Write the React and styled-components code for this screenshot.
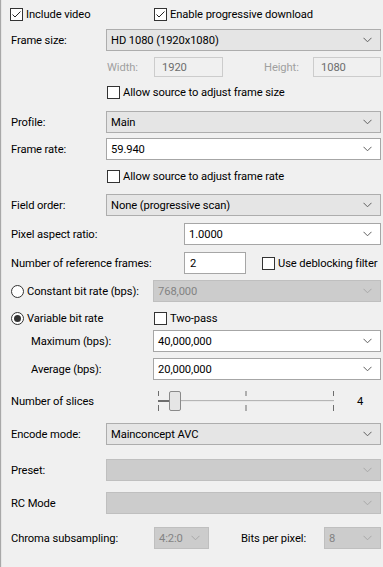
import styled, { createGlobalStyle } from 'styled-components';

const GlobalStyle = createGlobalStyle`
  html, body {
    margin: 0;
    padding: 0;
    background: #f0f0f0;
  }
  * {
    box-sizing: border-box;
  }
`;

const Panel = styled.div`
  width: 383px;
  height: 567px;
  overflow: hidden;
  background: #f0f0f0;
  border-left: 1px solid #a8a8a8;
  box-shadow: inset 1px 0 0 #e6e6e6;
  padding: 4px 2px 0 9px;
  font-family: Roboto, "Liberation Sans", sans-serif;
  font-size: 11.2px;
  letter-spacing: -0.1px;
  color: #000;
  display: flex;
  flex-direction: column;
`;

const Row = styled.div`
  display: flex;
  align-items: center;
  height: ${({ h }) => h || 22}px;
  margin-top: ${({ mt }) => mt || 0}px;
  padding-left: ${({ indent }) => indent || 0}px;
`;

const Label = styled.span`
  flex: none;
  width: ${({ w }) => (w ? `${w}px` : 'auto')};
  padding-left: ${({ pl }) => pl || 0}px;
  color: ${({ disabled }) => (disabled ? '#a0a0a0' : '#000')};
  white-space: nowrap;
`;

const Spacer = styled.div`
  flex: none;
  width: ${({ w }) => w}px;
`;

const Combo = styled.div`
  flex: ${({ w }) => (w ? 'none' : '1')};
  width: ${({ w }) => (w ? `${w}px` : 'auto')};
  height: 22px;
  display: flex;
  align-items: center;
  padding: 0 8px 0 4px;
  white-space: nowrap;
  background: ${({ kind }) =>
    kind === 'edit' ? '#ffffff' : kind === 'off' ? '#cccccc' : '#e5e5e5'};
  border: 1px solid
    ${({ kind }) =>
      kind === 'edit' ? '#a6a6a6' : kind === 'off' ? '#bfbfbf' : '#adadad'};
  color: ${({ kind }) => (kind === 'off' ? '#838383' : '#000')};

  span {
    flex: 1;
  }
`;

const Field = styled.div`
  flex: ${({ w }) => (w ? 'none' : '1')};
  width: ${({ w }) => (w ? `${w}px` : 'auto')};
  height: ${({ h }) => h || 22}px;
  display: flex;
  align-items: center;
  padding-left: ${({ disabled }) => (disabled ? 7 : 5)}px;
  background: ${({ disabled }) => (disabled ? '#f0f0f0' : '#ffffff')};
  border: 1px solid ${({ disabled }) => (disabled ? '#cccccc' : '#a6a6a6')};
  color: ${({ disabled }) => (disabled ? '#6d6d6d' : '#000')};
`;

const Check = styled.label`
  display: flex;
  align-items: center;
  gap: 3px;
  white-space: nowrap;
`;

const Box = styled.span`
  flex: none;
  width: 13px;
  height: 13px;
  border: 1px solid #333333;
  background: #ffffff;
  display: flex;
  align-items: center;
  justify-content: center;
`;

const Radio = styled.span`
  flex: none;
  width: 13px;
  height: 13px;
  border-radius: 50%;
  border: 1px solid #333333;
  background: #ffffff;
  display: flex;
  align-items: center;
  justify-content: center;

  &::after {
    content: '';
    display: ${({ on }) => (on ? 'block' : 'none')};
    width: 7px;
    height: 7px;
    border-radius: 50%;
    background: #333333;
  }
`;

const SliderWrap = styled.div`
  flex: none;
  width: 180px;
  height: 22px;
`;

const Value = styled.span`
  margin-left: 19px;
`;

const Chevron = ({ off }) => (
  <svg width="9" height="6" viewBox="0 0 9 6">
    <path
      d="M0.5 0.8 L4.5 4.8 L8.5 0.8"
      fill="none"
      stroke={off ? '#a8a8a8' : '#606060'}
      strokeWidth="1"
    />
  </svg>
);

const Tick = () => (
  <svg width="11" height="11" viewBox="0 0 11 11">
    <path d="M1.5 5.5 L4 8 L9.5 2.5" fill="none" stroke="#222" strokeWidth="1" />
  </svg>
);

function CheckBox({ checked, children }) {
  return (
    <Check>
      <Box>{checked && <Tick />}</Box>
      <span>{children}</span>
    </Check>
  );
}

function Select({ kind, w, children }) {
  return (
    <Combo kind={kind} w={w}>
      <span>{children}</span>
      <Chevron off={kind === 'off'} />
    </Combo>
  );
}

function Slider() {
  const ticks = [0.5, 88, 175.5];
  return (
    <SliderWrap>
      <svg width="180" height="22" viewBox="0 0 180 22">
        <rect x="0" y="10" width="176" height="2" fill="#e7e7e7" />
        <line x1="0" y1="10.5" x2="176" y2="10.5" stroke="#b5b5b5" />
        <rect x="0" y="10" width="12" height="2" fill="#6d6d6d" />
        {ticks.map((x) => (
          <g key={x} stroke="#6d6d6d">
            <line x1={x} y1="1" x2={x} y2="6" />
            <line x1={x} y1="15" x2={x} y2="21" />
          </g>
        ))}
        <rect x="11.5" y="1.5" width="11" height="19" rx="1.5" fill="#e5e5e5" stroke="#8a8a8a" />
      </svg>
    </SliderWrap>
  );
}

export default function App() {
  return (
    <>
      <GlobalStyle />
      <Panel>
        <Row h={20}>
          <Label w={144}>
            <CheckBox checked>Include video</CheckBox>
          </Label>
          <CheckBox checked>Enable progressive download</CheckBox>
        </Row>

        <Row mt={5}>
          <Label w={96} pl={1}>Frame size:</Label>
          <Select>HD 1080 (1920x1080)</Select>
        </Row>

        <Row mt={6} h={20} indent={97}>
          <Label w={47} disabled>Width:</Label>
          <Field w={69} h={20} disabled>1920</Field>
          <Spacer w={41} />
          <Label w={49} disabled>Height:</Label>
          <Field h={20} disabled>1080</Field>
        </Row>

        <Row mt={5} h={20} indent={97}>
          <CheckBox>Allow source to adjust frame size</CheckBox>
        </Row>

        <Row mt={9}>
          <Label w={96} pl={1}>Profile:</Label>
          <Select>Main</Select>
        </Row>

        <Row mt={5}>
          <Label w={96} pl={1}>Frame rate:</Label>
          <Select kind="edit">59.940</Select>
        </Row>

        <Row mt={6} h={20} indent={97}>
          <CheckBox>Allow source to adjust frame rate</CheckBox>
        </Row>

        <Row mt={8}>
          <Label w={96} pl={1}>Field order:</Label>
          <Select>None (progressive scan)</Select>
        </Row>

        <Row mt={7}>
          <Label w={174} pl={1}>Pixel aspect ratio:</Label>
          <Select kind="edit">1.0000</Select>
        </Row>

        <Row mt={7}>
          <Label w={174} pl={1}>Number of reference frames:</Label>
          <Field w={62}>2</Field>
          <Spacer w={16} />
          <CheckBox>Use deblocking filter</CheckBox>
        </Row>

        <Row mt={6}>
          <Label w={143} pl={1}>
            <Check>
              <Radio />
              <span>Constant bit rate (bps):</span>
            </Check>
          </Label>
          <Select kind="off">768,000</Select>
        </Row>

        <Row mt={6} h={20}>
          <Label w={144} pl={1}>
            <Check>
              <Radio on />
              <span>Variable bit rate</span>
            </Check>
          </Label>
          <CheckBox>Two-pass</CheckBox>
        </Row>

        <Row mt={2}>
          <Label w={143} pl={21}>Maximum (bps):</Label>
          <Select kind="edit">40,000,000</Select>
        </Row>

        <Row mt={6}>
          <Label w={143} pl={21}>Average (bps):</Label>
          <Select kind="edit">20,000,000</Select>
        </Row>

        <Row mt={10}>
          <Label w={148} pl={1}>Number of slices</Label>
          <Slider />
          <Value>4</Value>
        </Row>

        <Row mt={11}>
          <Label w={96} pl={1}>Encode mode:</Label>
          <Select>Mainconcept AVC</Select>
        </Row>

        <Row mt={14}>
          <Label w={96} pl={1}>Preset:</Label>
          <Select kind="off" />
        </Row>

        <Row mt={11}>
          <Label w={96} pl={1}>RC Mode</Label>
          <Select kind="off" />
        </Row>

        <Row mt={13}>
          <Label w={144} pl={1}>Chroma subsampling:</Label>
          <Select kind="off" w={55}>4:2:0</Select>
          <Spacer w={32} />
          <Label w={83}>Bits per pixel:</Label>
          <Select kind="off">8</Select>
        </Row>
      </Panel>
    </>
  );
}
